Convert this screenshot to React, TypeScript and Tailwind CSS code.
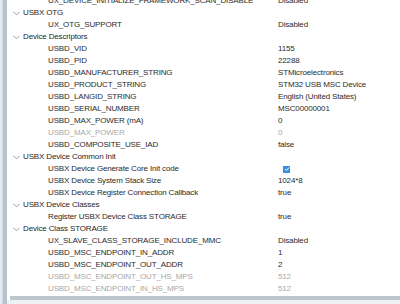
type Row =
  | { kind: "group"; label: string }
  | { kind: "item"; label: string; value: string; muted?: boolean; check?: boolean };

const rows: Row[] = [
  { kind: "item", label: "UX_DEVICE_INITIALIZE_FRAMEWORK_SCAN_DISABLE", value: "Disabled" },
  { kind: "group", label: "USBX OTG" },
  { kind: "item", label: "UX_OTG_SUPPORT", value: "Disabled" },
  { kind: "group", label: "Device Descriptors" },
  { kind: "item", label: "USBD_VID", value: "1155" },
  { kind: "item", label: "USBD_PID", value: "22288" },
  { kind: "item", label: "USBD_MANUFACTURER_STRING", value: "STMicroelectronics" },
  { kind: "item", label: "USBD_PRODUCT_STRING", value: "STM32 USB MSC Device" },
  { kind: "item", label: "USBD_LANGID_STRING", value: "English (United States)" },
  { kind: "item", label: "USBD_SERIAL_NUMBER", value: "MSC00000001" },
  { kind: "item", label: "USBD_MAX_POWER (mA)", value: "0" },
  { kind: "item", label: "USBD_MAX_POWER", value: "0", muted: true },
  { kind: "item", label: "USBD_COMPOSITE_USE_IAD", value: "false" },
  { kind: "group", label: "USBX Device Common Init" },
  { kind: "item", label: "USBX Device Generate Core Init code", value: "", check: true },
  { kind: "item", label: "USBX Device System Stack Size", value: "1024*8" },
  { kind: "item", label: "USBX Device Register Connection Callback", value: "true" },
  { kind: "group", label: "USBX Device Classes" },
  { kind: "item", label: "Register USBX Device Class STORAGE", value: "true" },
  { kind: "group", label: "Device Class STORAGE" },
  { kind: "item", label: "UX_SLAVE_CLASS_STORAGE_INCLUDE_MMC", value: "Disabled" },
  { kind: "item", label: "USBD_MSC_ENDPOINT_IN_ADDR", value: "1" },
  { kind: "item", label: "USBD_MSC_ENDPOINT_OUT_ADDR", value: "2" },
  { kind: "item", label: "USBD_MSC_ENDPOINT_OUT_HS_MPS", value: "512", muted: true },
  { kind: "item", label: "USBD_MSC_ENDPOINT_IN_HS_MPS", value: "512", muted: true },
];

function Chevron() {
  return (
    <svg width="7" height="5" viewBox="0 0 7 5" className="mr-[3px] shrink-0">
      <path d="M0.5 0.8 L3.5 3.8 L6.5 0.8" fill="none" stroke="#8a8f94" strokeWidth="0.9" />
    </svg>
  );
}

function Check() {
  return (
    <span className="ml-[5px] flex h-[7px] w-[7px] items-center justify-center bg-[#3a8ee0]">
      <svg width="6" height="6" viewBox="0 0 6 6">
        <path d="M1 3 L2.5 4.4 L5 1.5" fill="none" stroke="#ffffff" strokeWidth="1" />
      </svg>
    </span>
  );
}

export default function App() {
  return (
    <div
      className="flex h-[304px] w-[400px] overflow-hidden bg-white text-[8px] leading-[12px] tracking-[-0.15px] text-[#2b2b2b]"
      style={{ fontFamily: '"Liberation Sans", Arial, sans-serif' }}
    >
      <div className="w-[2px] shrink-0 bg-[#e6eaee]" />
      <div className="w-[1px] shrink-0 bg-[#cbdbe8]" />
      <div className="w-[4px] shrink-0 bg-[#bac3ca]" />
      <div className="flex min-w-0 flex-1 flex-col">
        <div className="-mt-[5px] flex h-[301px] flex-col overflow-hidden">
          {rows.map((row, i) =>
            row.kind === "group" ? (
              <div key={i} className="flex h-[12px] shrink-0 items-center pl-[6px] text-[#1f1f1f]">
                <Chevron />
                <span className="whitespace-nowrap">{row.label}</span>
              </div>
            ) : (
              <div
                key={i}
                className={
                  row.muted
                    ? "flex h-[12px] shrink-0 items-center text-[#a8a8a8]"
                    : "flex h-[12px] shrink-0 items-center"
                }
              >
                <span className="w-[271px] shrink-0 whitespace-nowrap pl-[41px]">{row.label}</span>
                {row.check ? <Check /> : <span className="whitespace-nowrap">{row.value}</span>}
              </div>
            )
          )}
        </div>
        <div className="ml-[3px] h-[4px] shrink-0 bg-[#bcc6cd]" />
        <div className="flex-1 bg-[#eef1f3]" />
      </div>
    </div>
  );
}
